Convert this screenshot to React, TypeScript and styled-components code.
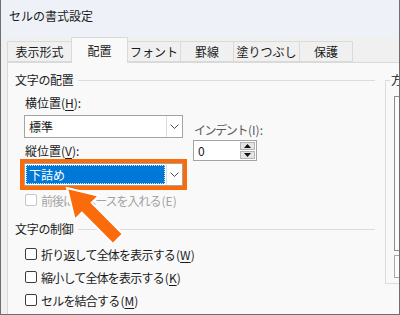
import React from 'react';
import styled, { createGlobalStyle } from 'styled-components';

const GlobalStyle = createGlobalStyle`
  html, body { margin: 0; padding: 0; background: #ffffff; }
  body {
    font-family: "Noto Sans CJK JP", "Noto Sans", sans-serif;
    font-size: 12px;
    color: #1b1b1b;
  }
  * { box-sizing: border-box; }
`;

const ORANGE = '#fa6b0c';

const Window = styled.div`
  position: relative;
  width: 400px;
  height: 315px;
  display: flex;
  flex-direction: column;
  background: #f0f0f0;
  border: 1px solid #6e6e6e;
  border-top: none;
  overflow: hidden;
`;

const TitleBar = styled.div`
  flex: none;
  height: 37px;
  padding: 0 0 7px 8px;
  display: flex;
  align-items: center;
  background: #eef2f8;
  color: #1a1a1a;
  font-size: 12px;
`;

const TabStrip = styled.div`
  flex: none;
  height: 25px;
  padding-left: 6px;
  display: flex;
  align-items: flex-end;
  position: relative;
  z-index: 1;
`;

const Tab = styled.div<{ $w: number; $active?: boolean }>`
  width: ${p => p.$w}px;
  height: ${p => (p.$active ? 26 : 21)}px;
  margin-left: -1px;
  margin-bottom: ${p => (p.$active ? -1 : 0)}px;
  display: flex;
  align-items: center;
  justify-content: center;
  padding-bottom: ${p => (p.$active ? 1 : 0)}px;
  border: 1px solid #dadada;
  border-bottom: ${p => (p.$active ? 'none' : '1px solid #dadada')};
  background: ${p => (p.$active ? '#f9f9f9' : '#f0f0f0')};
  white-space: nowrap;
  &:first-child { margin-left: 0; }
`;

const Panel = styled.div`
  flex: 1;
  margin-left: 6px;
  padding: 9px 0 0 7px;
  display: flex;
  gap: 10px;
  background: #f9f9f9;
  border-left: 1px solid #d9d9d9;
  border-top: 1px solid #d9d9d9;
`;

const LeftColumn = styled.div`
  flex: none;
  width: 360px;
  display: flex;
  flex-direction: column;
`;

const GroupHeader = styled.div<{ $top?: number }>`
  height: 16px;
  line-height: 16px;
  margin-top: ${p => p.$top ?? 0}px;
  display: flex;
  align-items: center;
  gap: 4px;
  white-space: nowrap;
  letter-spacing: -0.3px;
  &::after {
    content: '';
    flex: 1;
    height: 1px;
    background: #dcdcdc;
  }
`;

const AlignRow = styled.div`
  margin-top: 7px;
  padding-left: 9px;
  display: flex;
`;

const SubColumn = styled.div<{ $w?: number; $left?: number }>`
  display: flex;
  flex-direction: column;
  width: ${p => (p.$w ? `${p.$w}px` : 'auto')};
  margin-left: ${p => p.$left ?? 0}px;
`;

const Label = styled.div<{ $top?: number; $muted?: boolean; $tight?: number }>`
  height: 16px;
  line-height: 16px;
  margin-top: ${p => p.$top ?? 0}px;
  padding-left: 1px;
  color: ${p => (p.$muted ? '#5a5a5a' : '#1b1b1b')};
  letter-spacing: ${p => p.$tight ?? 0}px;
  white-space: nowrap;
  u { text-underline-offset: 2px; }
`;

/* mnemonic part like "(W)" keeps normal spacing */
const Key = styled.span`
  letter-spacing: 0;
  margin-left: 1px;
`;

const SelectBox = styled.div<{ $top?: number }>`
  width: 159px;
  height: 23px;
  margin-top: ${p => p.$top ?? 0}px;
  display: flex;
  background: #ffffff;
  border: 1px solid #a3a3a3;
`;

const SelectValue = styled.div<{ $selected?: boolean }>`
  flex: 1;
  display: flex;
  align-items: center;
  margin: 1px;
  padding-left: 3px;
  background: ${p => (p.$selected ? '#0078d7' : 'transparent')};
  color: ${p => (p.$selected ? '#ffffff' : '#1b1b1b')};
  outline: ${p => (p.$selected ? '1px dotted #d8e6f7' : 'none')};
  outline-offset: -1px;
`;

const DropButton = styled.div`
  flex: none;
  width: 16px;
  display: flex;
  align-items: center;
  justify-content: center;
  border-left: 1px solid #dcdcdc;
`;

const HighlightFrame = styled.div`
  width: 167px;
  margin-left: -4px;
  border: 4px solid ${ORANGE};
`;

const SpinBox = styled.div`
  width: 64px;
  height: 21px;
  margin-top: 2px;
  display: flex;
  background: #ffffff;
  border: 1px solid #a3a3a3;
`;

const SpinValue = styled.div`
  flex: 1;
  display: flex;
  align-items: center;
  padding-left: 4px;
`;

const SpinButtons = styled.div`
  flex: none;
  width: 16px;
  display: flex;
  flex-direction: column;
  gap: 1px;
  padding: 1px 1px 1px 0;
`;

const SpinButton = styled.div`
  flex: 1;
  display: flex;
  align-items: center;
  justify-content: center;
  background: #e4e4e4;
  border: 1px solid #b4b4b4;
`;

const CheckList = styled.div<{ $top: number }>`
  margin-top: ${p => p.$top}px;
  display: flex;
  flex-direction: column;
  gap: 7px;
`;

const CheckRow = styled.div<{ $disabled?: boolean }>`
  height: 16px;
  padding-left: 10px;
  display: flex;
  align-items: center;
  gap: 4px;
  color: ${p => (p.$disabled ? '#a3a3a3' : '#1b1b1b')};
  letter-spacing: ${p => (p.$disabled ? -1 : -0.8)}px;
  white-space: nowrap;
  u { text-underline-offset: 2px; }
`;

const CheckBox = styled.span<{ $disabled?: boolean }>`
  flex: none;
  width: 12px;
  height: 12px;
  border: 1px solid ${p => (p.$disabled ? '#c6c6c6' : '#3c3c3c')};
  border-radius: 2px;
  background: #ffffff;
`;

const GroupBox = styled.fieldset`
  flex: none;
  width: 40px;
  height: 212px;
  margin: 0;
  padding: 0 0 0 8px;
  border: 1px solid #dcdcdc;
  legend {
    margin-left: -4px;
    padding: 0 1px;
    line-height: 16px;
    white-space: nowrap;
  }
`;

const OrientBox = styled.div<{ $h: number; $top: number; $color: string }>`
  height: ${p => p.$h}px;
  margin-top: ${p => p.$top}px;
  border: 1px solid ${p => p.$color};
  background: #fbfbfb;
`;

const ArrowMark = styled.svg`
  position: absolute;
  left: 54px;
  top: 176px;
  z-index: 2;
`;

const Chevron = () => (
  <svg width="9" height="5" viewBox="0 0 9 5">
    <polyline points="0.5,0.5 4.5,4.5 8.5,0.5" fill="none" stroke="#4a4a4a" strokeWidth="1" />
  </svg>
);

const Triangle = ({ up }: { up?: boolean }) => (
  <svg width="7" height="4" viewBox="0 0 7 4">
    <polygon points={up ? '3.5,0 7,4 0,4' : '0,0 7,0 3.5,4'} fill="#111" />
  </svg>
);

const tabs = [
  { label: '表示形式', w: 65 },
  { label: '配置', w: 57, active: true },
  { label: 'フォント', w: 54 },
  { label: '罫線', w: 54 },
  { label: '塗りつぶし', w: 67 },
  { label: '保護', w: 54 },
];

export default function App() {
  return (
    <>
      <GlobalStyle />
      <Window>
        <TitleBar>セルの書式設定</TitleBar>
        <TabStrip>
          {tabs.map(t => (
            <Tab key={t.label} $w={t.w} $active={t.active}>
              {t.label}
            </Tab>
          ))}
        </TabStrip>
        <Panel>
          <LeftColumn>
            <GroupHeader>文字の配置</GroupHeader>
            <AlignRow>
              <SubColumn $w={159}>
                <Label>横位置(<u>H</u>):</Label>
                <SelectBox $top={4}>
                  <SelectValue>標準</SelectValue>
                  <DropButton><Chevron /></DropButton>
                </SelectBox>
                <Label $top={5}>縦位置(<u>V</u>):</Label>
                <HighlightFrame>
                  <SelectBox>
                    <SelectValue $selected>下詰め</SelectValue>
                    <DropButton><Chevron /></DropButton>
                  </SelectBox>
                </HighlightFrame>
              </SubColumn>
              <SubColumn $left={10}>
                <Label $top={27} $muted $tight={-1.4}>
                  インデント<Key>(I):</Key>
                </Label>
                <SpinBox>
                  <SpinValue>0</SpinValue>
                  <SpinButtons>
                    <SpinButton><Triangle up /></SpinButton>
                    <SpinButton><Triangle /></SpinButton>
                  </SpinButtons>
                </SpinBox>
              </SubColumn>
            </AlignRow>
            <CheckList $top={2}>
              <CheckRow $disabled>
                <CheckBox $disabled />
                <span>前後にスペースを入れる<Key>(E)</Key></span>
              </CheckRow>
            </CheckList>
            <GroupHeader $top={13}>文字の制御</GroupHeader>
            <CheckList $top={9}>
              <CheckRow>
                <CheckBox />
                <span>折り返して全体を表示する<Key>(<u>W</u>)</Key></span>
              </CheckRow>
              <CheckRow>
                <CheckBox />
                <span>縮小して全体を表示する<Key>(<u>K</u>)</Key></span>
              </CheckRow>
              <CheckRow>
                <CheckBox />
                <span>セルを結合する<Key>(<u>M</u>)</Key></span>
              </CheckRow>
            </CheckList>
          </LeftColumn>
          <GroupBox>
            <legend>方向</legend>
            <OrientBox $h={155} $top={8} $color="#8c8c8c" />
            <OrientBox $h={23} $top={4} $color="#a8a8a8" />
          </GroupBox>
        </Panel>
        <ArrowMark width="80" height="80" viewBox="0 0 80 80">
          <g transform="translate(12,12) rotate(45)">
            <polygon
              points="0,0 28,-17 28,-7 72,-7 72,7 28,7 28,17"
              fill={ORANGE}
              stroke="#ffffff"
              strokeWidth="2"
              strokeLinejoin="miter"
            />
          </g>
        </ArrowMark>
      </Window>
    </>
  );
}
